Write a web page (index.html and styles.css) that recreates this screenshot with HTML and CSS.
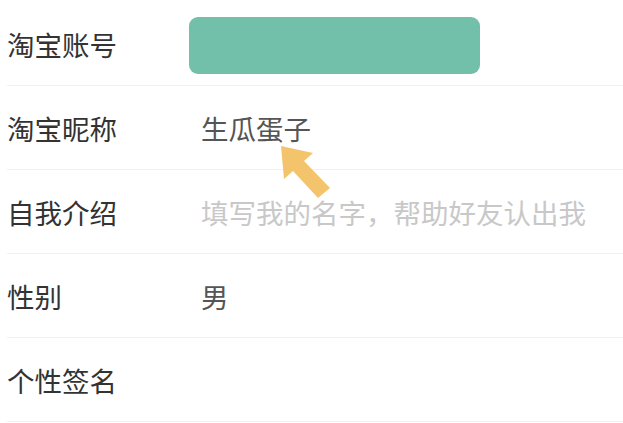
FILE: index.html
```html
<!DOCTYPE html>
<html lang="zh">
<head>
    <meta charset="UTF-8">
    <title>个人资料</title>
    <link rel="stylesheet" href="styles.css">
</head>
<body>
    <div class="profile">
        <div class="row">
            <div class="label">淘宝账号</div>
            <div class="value"><div class="masked"></div></div>
        </div>
        <div class="row">
            <div class="label">淘宝昵称</div>
            <div class="value">生瓜蛋子</div>
        </div>
        <div class="row">
            <div class="label">自我介绍</div>
            <div class="value placeholder">填写我的名字，帮助好友认出我</div>
        </div>
        <div class="row">
            <div class="label">性别</div>
            <div class="value">男</div>
        </div>
        <div class="row">
            <div class="label">个性签名</div>
            <div class="value"></div>
        </div>

        <!-- 指向昵称的箭头 -->
        <svg class="pointer" width="60" height="65" viewBox="0 0 60 65">
            <polygon points="6,6 38,13 29,21 55,48 43,58 18,31 9,39" fill="#f4c46c"/>
        </svg>
    </div>
</body>
</html>
```

FILE: styles.css
```css
body {
    margin: 0;
    background: #fff;
    font-family: "Noto Sans CJK SC", "Noto Sans", sans-serif;
}
.profile {
    position: relative;
    padding-top: 2px;
}
.row {
    display: flex;
    align-items: center;
    height: 83px;
    margin-left: 7px;
    border-bottom: 1px solid #f0f0f0;
}
.label {
    width: 194px;
    font-size: 27.5px;
    color: #333;
}
.value {
    font-size: 27.5px;
    color: #555;
}
.placeholder {
    color: #c8c8c8;
}
.masked {
    width: 291px;
    height: 57px;
    margin-left: -12px;
    margin-top: 4px;
    border-radius: 9px;
    background-color: #72c0a9;
}
.pointer {
    position: absolute;
    left: 275px;
    top: 140px;
}
```
